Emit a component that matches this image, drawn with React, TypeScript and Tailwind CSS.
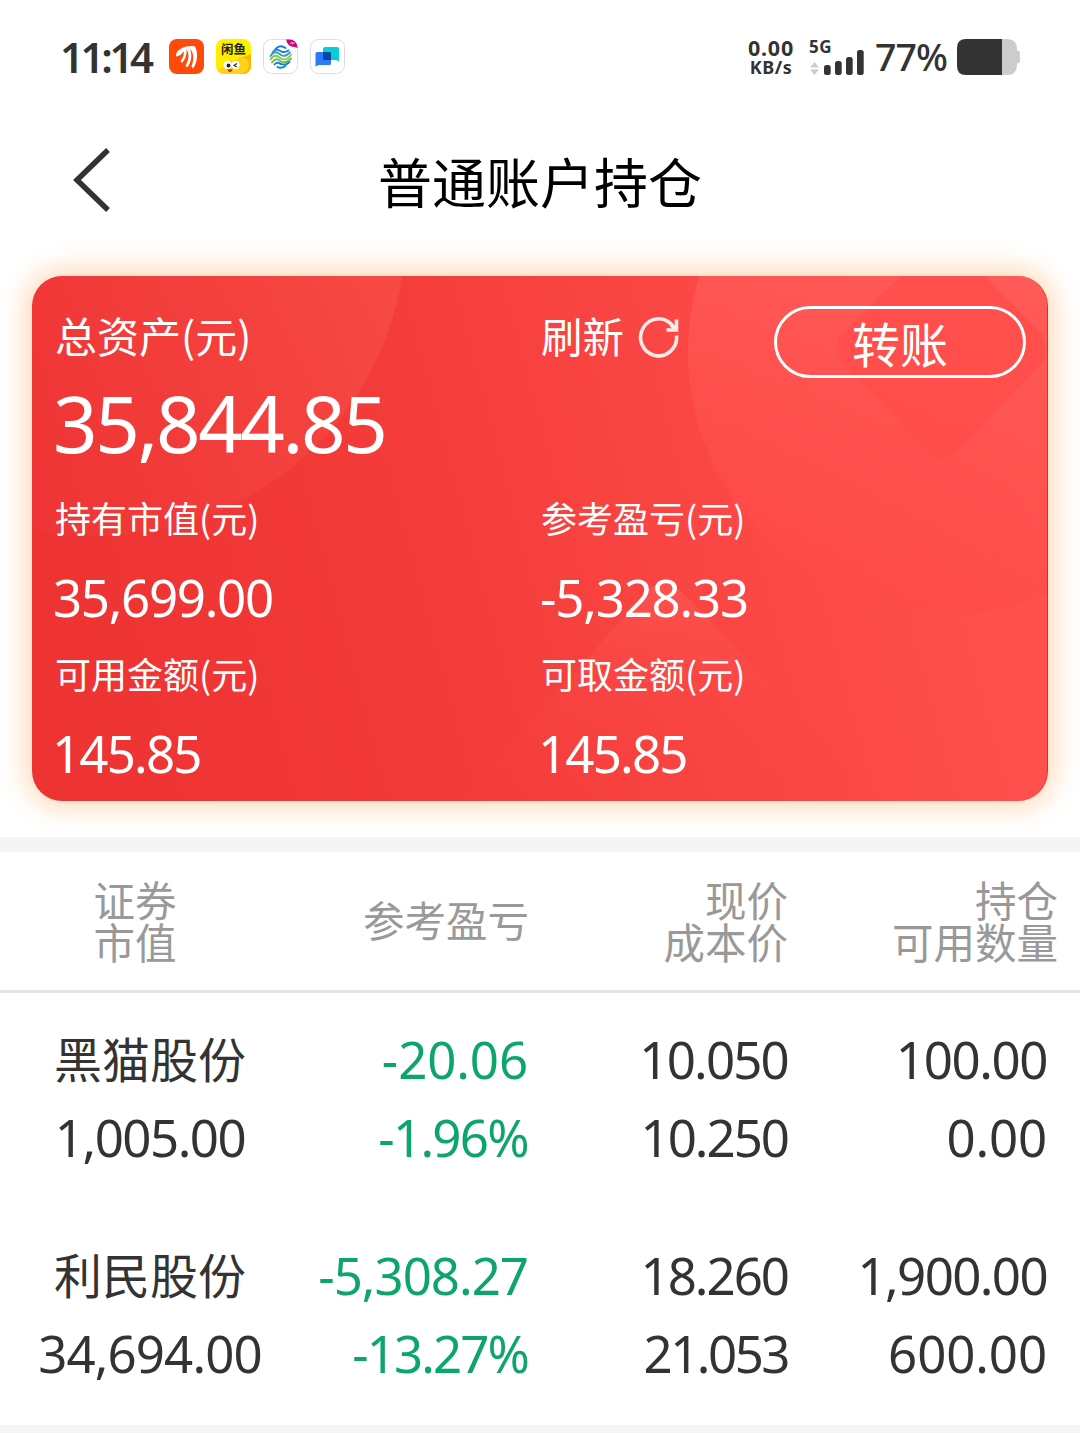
import React from 'react';

type Cell = { text: string; spacing: string };

type Holding = {
  name: string;
  value: Cell;
  profit: Cell;
  rate: Cell;
  price: Cell;
  cost: Cell;
  amount: Cell;
  usable: Cell;
};

const holdings: Holding[] = [
  {
    name: '黑猫股份',
    value: { text: '1,005.00', spacing: 'tracking-[-1.5px]' },
    profit: { text: '-20.06', spacing: 'tracking-[-0.1px]' },
    rate: { text: '-1.96%', spacing: 'tracking-[-1.7px]' },
    price: { text: '10.050', spacing: 'tracking-[-1.8px]' },
    cost: { text: '10.250', spacing: 'tracking-[-2px]' },
    amount: { text: '100.00', spacing: 'tracking-[-1.4px]' },
    usable: { text: '0.00', spacing: 'tracking-[-0.2px]' },
  },
  {
    name: '利民股份',
    value: { text: '34,694.00', spacing: 'tracking-[-0.9px]' },
    profit: { text: '-5,308.27', spacing: 'tracking-[-1px]' },
    rate: { text: '-13.27%', spacing: 'tracking-[-1.9px]' },
    price: { text: '18.260', spacing: 'tracking-[-2px]' },
    cost: { text: '21.053', spacing: 'tracking-[-2.5px]' },
    amount: { text: '1,900.00', spacing: 'tracking-[-1.6px]' },
    usable: { text: '600.00', spacing: 'tracking-[-0.1px]' },
  },
];

function StatusBar() {
  return (
    <div className="flex h-[112px] items-start px-[60px] pt-[39px] text-[#333]">
      <div className="w-[109px] text-[42px] leading-[35px] font-semibold tracking-[-3.4px] whitespace-nowrap font-['Noto_Sans',sans-serif]">11:14</div>
      <div className="flex gap-3">
        <svg width="35" height="35" viewBox="0 0 35 35">
          <rect width="35" height="35" rx="8" fill="#ff4a0a" />
          <path d="M7 15C10 9 18 6 26 7.500C29 13 29 23 24 29.500L22.500 27C25.500 20 24.500 13 21 10C23.500 16 22.500 24 18 28.500L16.500 26.500C20 21 20.500 14 17.500 10.500C18 16 16 21 13 24L11.500 22C14.500 18 15.500 14 14.500 12.500C12 16 10.500 17 7 17.500Z" fill="#fff" />
        </svg>
        <div className="relative h-[35px] w-[35px] overflow-hidden rounded-lg bg-[#ffee00]">
          <svg className="absolute inset-0" width="35" height="35" viewBox="0 0 35 35">
            <path d="M3 35C2 31 3 29 6 29C9 22 16 20 20 21C25 16 31 17 33 21V35Z" fill="#ffd21a" />
            <path d="M24 19C29 17 33 20 33 26C33 31 29 34 24 35H35V15Z" fill="#ffb400" />
            <circle cx="11.500" cy="26" r="4.200" fill="#fff" />
            <circle cx="19.500" cy="26" r="4.200" fill="#fff" />
            <circle cx="12.500" cy="26.500" r="1.900" fill="#222" />
            <path d="M21 24.500l-3 2 3 1.500" stroke="#333" strokeWidth="1.200" fill="none" />
            <path d="M11.500 30q3 1 5-.5q-.5 4-3 3.500q-2-.5-2-3z" fill="#d8231c" />
          </svg>
          <div className="absolute top-[3px] left-[5px] text-[12.5px] leading-[14px] font-bold whitespace-nowrap text-[#222] font-['Noto_Sans_CJK_SC',sans-serif]">闲鱼</div>
        </div>
        <svg width="35" height="35" viewBox="0 0 35 35">
          <defs>
            <clipPath id="tile">
              <rect x=".5" y=".5" width="34" height="34" rx="8" />
            </clipPath>
          </defs>
          <rect x=".5" y=".5" width="34" height="34" rx="8" fill="#fff" stroke="#ddd" />
          <g fill="none" strokeWidth="1.900" strokeLinecap="round">
            <path d="M12.500 10Q17 5 22.500 9" stroke="#0f84cf" />
            <path d="M9.500 13.500C14 8 16 12 19 12.800S24 12.500 25.500 11.500" stroke="#0f84cf" />
            <path d="M7.500 17C12 10.500 15 14 18 16S24 16.500 27 13.500" stroke="#3c9fc0" />
            <path d="M7.500 20.500C12 14 15 17.500 18 19.500S25 20 28 16" stroke="#8cc63f" />
            <path d="M9 23.500C13 18 15.500 21 18 22.500S24 23.500 28 19.500" stroke="#6db85c" />
            <path d="M11.500 25.500C14.500 22 16.500 24.500 18.500 25.200S23.500 26 26.500 23" stroke="#0f84cf" />
            <path d="M14.500 28Q18 30 22.500 27" stroke="#0f84cf" />
          </g>
          <path d="M23 0H35V9Q31 7.500 28.500 7.500Q24 6 23 0Z" fill="#d6007f" clipPath="url(#tile)" />
          <path d="M27 5l2-2 .5 2 2-1.500" stroke="#fff" strokeWidth=".8" fill="none" />
        </svg>
        <svg width="35" height="35" viewBox="0 0 35 35">
          <rect x=".5" y=".5" width="34" height="34" rx="8" fill="#fff" stroke="#ddd" />
          <path d="M15 8H27.500Q29 8 29 9.500V22.500L26 21H15Q13 21 13 19.500V9.500Q13 8 15 8Z" fill="#0ccbd2" />
          <path d="M7.500 13H19.500Q21 13 21 14.500V24.500Q21 26 19.500 26H9L5.500 27.500V14.500Q5.500 13 7.500 13Z" fill="#2b7cf6" />
          <path d="M13 13H19.500Q21 13 21 14.500V21H15Q13 21 13 19.500Z" fill="#0547a8" />
        </svg>
      </div>
      <div className="ml-auto flex font-['Noto_Sans',sans-serif]">
        <div className="w-[62px] font-bold">
          <div className="w-[48px] text-center text-[21.5px] leading-[17px] tracking-[0.8px]">0.00</div>
          <div className="w-[48px] text-center text-[18px] leading-[22px] tracking-[0.5px]">KB/s</div>
        </div>
        <div className="w-[64px]">
          <div className="text-[17px] leading-[15px] font-bold tracking-[0.5px]">5G</div>
          <svg className="-mt-[6px]" width="56" height="28" viewBox="0 0 56 28">
            <path d="M1 19.500l4.500-5.500 4.500 5.500zM1 21.500h9l-4.500 5.500z" fill="#ccc" />
            <rect x="15" y="17" width="6.700" height="10" rx="2.500" fill="#333" />
            <rect x="26" y="13" width="6.700" height="14" rx="2.500" fill="#333" />
            <rect x="37" y="9" width="6.700" height="18" rx="2.500" fill="#333" />
            <rect x="48" y="2" width="6.700" height="25" rx="2.500" fill="#333" />
          </svg>
        </div>
        <div className="w-[84px] pl-[2px] text-[37.5px] leading-[35px] font-medium tracking-[-1px]">77%</div>
        <svg width="63" height="36" viewBox="0 0 63 36">
          <path d="M8 0H50Q60 0 60 10V11.500Q63 12 63 14V22Q63 24 60 24.500V26Q60 36 50 36H8Z" fill="#ccc" />
          <path d="M9 0H45V36H9Q0 36 0 27V9Q0 0 9 0Z" fill="#333" />
        </svg>
      </div>
    </div>
  );
}

function CardArt() {
  return (
    <svg className="absolute inset-0" width="1016" height="525" viewBox="32 276 1016 525">
      <defs>
        <linearGradient id="left" gradientUnits="userSpaceOnUse" x1="90" y1="460" x2="390" y2="300">
          <stop offset="0" stopColor="#ff6a60" stopOpacity=".05" />
          <stop offset="1" stopColor="#ff6a60" stopOpacity=".26" />
        </linearGradient>
        <linearGradient id="right" x1="0.600" y1="0" x2="0.500" y2="1">
          <stop offset="0" stopColor="#ff6c6c" stopOpacity=".75" />
          <stop offset=".6" stopColor="#ff5653" stopOpacity=".6" />
          <stop offset="1" stopColor="#ff4a48" stopOpacity=".5" />
        </linearGradient>
        <linearGradient id="low" x1="0" y1="0" x2="0" y2="1">
          <stop offset="0" stopColor="#ff5c58" stopOpacity=".6" />
          <stop offset=".5" stopColor="#fa4a48" stopOpacity=".25" />
          <stop offset="1" stopColor="#f44040" stopOpacity=".1" />
        </linearGradient>
      </defs>
      <circle cx="98" cy="228" r="308" fill="url(#left)" />
      <circle cx="950" cy="352" r="262" fill="url(#right)" />
      <path d="M901 276L841 335Q832 348 841 361L926 450Q942 466 958 450L1041 364Q1050 348 1041 333L985 276Z" fill="#ff4c4a" fillOpacity=".75" />
      <path d="M648 590Q664 576 680 590L884 801H460Z" fill="url(#low)" />
    </svg>
  );
}

const label = "-mt-[2px] mb-[2px] text-[36px] leading-[78px] font-['Noto_Sans_CJK_SC',sans-serif]";
const figure = "text-[51px] leading-[78px] font-['Noto_Sans',sans-serif]";

function AssetCard() {
  return (
    <div className="relative h-[525px] overflow-hidden rounded-[30px] border-r border-[#d8331f] bg-linear-[75deg,#ee3333_5%,#f23a38_35%,#fb4845_68%,#ff5350_95%] text-white">
      <CardArt />
      <div className="relative grid grid-cols-[486px_1fr] pt-[22px] pl-[23px]">
        <div className="-mt-[2px] mb-[2px] text-[42px] leading-[78px] font-['Noto_Sans_CJK_SC',sans-serif]">总资产(元)</div>
        <div className="flex h-[78px] items-center">
          <div className="w-[84px] pb-1 text-[41.5px] leading-[74px] font-['Noto_Sans_CJK_SC',sans-serif]">刷新</div>
          <svg className="ml-[13px]" width="42" height="42" viewBox="0 0 42 42" fill="none" stroke="#ffeaea" strokeWidth="3.600">
            <path d="M38.500 19.500A18 18.500 0 1 1 34 9L37 12.500" />
            <path d="M38.500 3.500V14H28.500" />
            <path d="M33 9L38 14" />
          </svg>
          <button className="mt-[10px] ml-[94px] h-[72px] w-[252px] rounded-full border-3 border-white text-[48px] leading-[64px] font-['Noto_Sans_CJK_SC',sans-serif]">转账</button>
        </div>
        <div className="col-span-2 -ml-[2px] h-[104px] text-[78px] leading-[94px] tracking-[-2.4px] font-['Noto_Sans',sans-serif]">35,844.85</div>
        <div className={label}>持有市值(元)</div>
        <div className={label}>参考盈亏(元)</div>
        <div className={figure + ' -ml-[2px] tracking-[-1.3px]'}>35,699.00</div>
        <div className={figure + ' -ml-[1px] tracking-[-1.2px]'}>-5,328.33</div>
        <div className={label}>可用金额(元)</div>
        <div className={label}>可取金额(元)</div>
        <div className={figure + ' -ml-[3px] tracking-[-1.8px]'}>145.85</div>
        <div className={figure + ' -ml-[3px] tracking-[-1.8px]'}>145.85</div>
      </div>
    </div>
  );
}

const columns = 'grid grid-cols-[270px_258px_260px_1fr]';

function Figures({ cells, className }: { cells: Cell[]; className: string }) {
  return (
    <div className={className}>
      {cells.map((cell) => (
        <div key={cell.text} className={cell.spacing}>{cell.text}</div>
      ))}
    </div>
  );
}

function HoldingRow({ item }: { item: Holding }) {
  return (
    <div className={columns + " h-[216px] pt-[27px] text-right text-[51px] leading-[78px] text-[#333] font-['Noto_Sans',sans-serif]"}>
      <div className="pl-[30px] text-center">
        <div className="-mt-[2px] mb-[2px] text-[48px] leading-[78px] font-['Noto_Sans_CJK_SC',sans-serif]">{item.name}</div>
        <div className={'whitespace-nowrap ' + item.value.spacing}>{item.value.text}</div>
      </div>
      <Figures className="text-[#0ea56b]" cells={[item.profit, item.rate]} />
      <Figures className="" cells={[item.price, item.cost]} />
      <Figures className="pr-[33px]" cells={[item.amount, item.usable]} />
    </div>
  );
}

function ColumnTitle({ lines, className }: { lines: string[]; className: string }) {
  return (
    <div className={className}>
      {lines.map((line) => (
        <div key={line}>{line}</div>
      ))}
    </div>
  );
}

export default function App() {
  return (
    <div className="min-h-[1433px] w-[1080px] overflow-hidden bg-white font-['Noto_Sans_CJK_SC',sans-serif]">
      <StatusBar />
      <header className="grid h-[140px] grid-cols-[200px_1fr_200px] items-center pb-[4px]">
        <svg className="ml-[71px]" width="40" height="66" viewBox="0 0 40 66" fill="none" stroke="#333" strokeWidth="5.500">
          <path d="M37 3L6 33L37 63" />
        </svg>
        <h1 className="pt-[1px] text-center text-[54px] leading-[80px] text-black">普通账户持仓</h1>
      </header>
      <div className="h-[585px] px-8 pt-6">
        <div className="rounded-[30px] shadow-[0_0_30px_4px_#fcd3ab]">
          <AssetCard />
        </div>
      </div>
      <div className="h-[15px] bg-[#f5f5f5]" />
      <div className={columns + ' h-[141px] items-center border-b-3 border-[#e5e5e5] pb-[2px] text-right text-[41.5px] leading-[42px] text-[#999]'}>
        <ColumnTitle className="text-center" lines={['证券', '市值']} />
        <ColumnTitle className="-mr-[1px] pb-[3px]" lines={['参考盈亏']} />
        <ColumnTitle className="" lines={['现价', '成本价']} />
        <ColumnTitle className="pr-[22px]" lines={['持仓', '可用数量']} />
      </div>
      {holdings.map((item) => (
        <HoldingRow key={item.name} item={item} />
      ))}
      <div className="h-2 bg-[#f5f5f5]" />
    </div>
  );
}
